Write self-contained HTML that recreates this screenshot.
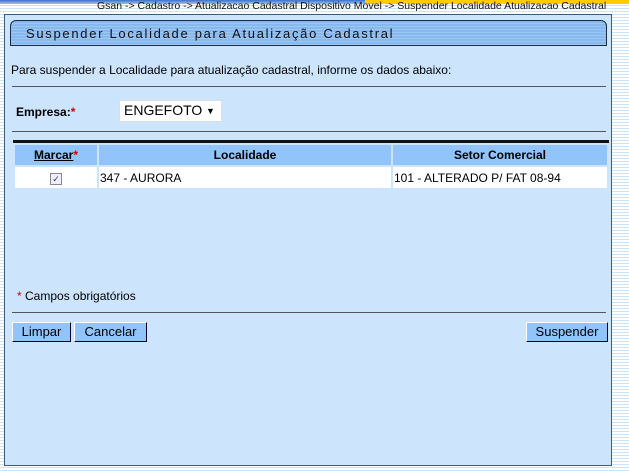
<!DOCTYPE html>
<html><head><style>
body{margin:0;width:629px;height:471px;overflow:hidden;font-family:"Liberation Sans",Arial,sans-serif;font-size:12px;
background:repeating-linear-gradient(to bottom,#fff 0,#fff 2px,#cfe3f6 2px,#cfe3f6 3px);position:relative}
.topb{position:absolute;left:0;top:0;width:365px;height:4px;background:linear-gradient(#3a6fd0,#9fc3f0)}
.topy{position:absolute;left:365px;top:0;width:264px;height:4px;background:#ffcc00}
.bc{position:absolute;left:97px;top:0;font-size:10.5px;color:#111;white-space:nowrap;line-height:12px}
.panel{position:absolute;left:4px;top:14px;width:606px;height:450px;background:#cce4fc;border:1px solid #3d5a78}
.title{position:absolute;left:5px;top:5px;width:595px;height:24px;border:1px solid #1a2c46;border-radius:6px 6px 0 0;
background:repeating-linear-gradient(to bottom,#87b8ee 0,#87b8ee 2px,#9cc6f4 2px,#9cc6f4 3px);}
.title span{position:absolute;left:15px;top:5px;font-size:13px;letter-spacing:1.7px;color:#111}
.abs{position:absolute;white-space:nowrap}
.hr{position:absolute;left:7px;width:594px;height:1px;background:#555}
.sel{position:absolute;left:114px;top:85px;width:101px;height:20px;background:#fff;border:1px solid #ddd;font-size:14px}
table{position:absolute;left:8px;top:125px;width:596px;border-collapse:separate;border-spacing:2px;border-top:3px solid #111;background:#cce4fc}
th{background:#90c4fa;height:18px;font-size:12px;font-weight:bold}
td{background:#fff;height:19px;font-size:12px}
.btn{position:absolute;top:307px;height:18px;background:#90c4fa;border:1px solid;border-color:#fff #002 #002 #fff;font-size:13px;text-align:center;line-height:18px}
</style></head><body>
<div class="topb"></div><div class="topy"></div>
<div class="bc">Gsan -&gt; Cadastro -&gt; Atualizacao Cadastral Dispositivo Movel -&gt; Suspender Localidade Atualizacao Cadastral</div>
<div class="panel">
<div class="title"><span>Suspender Localidade para Atualização Cadastral</span></div>
<div class="abs" style="left:6px;top:48px">Para suspender a Localidade para atualização cadastral, informe os dados abaixo:</div>
<div class="hr" style="top:71px"></div>
<div class="abs" style="left:11px;top:90px;font-weight:bold">Empresa:<span style="color:#c00">*</span></div>
<div class="sel"><span style="position:absolute;left:4px;top:1px">ENGEFOTO</span><span style="position:absolute;left:86px;top:5px;font-size:9px">▼</span></div>
<div class="hr" style="top:116px"></div>
<table>
<tr><th style="width:80px"><u>Marcar</u><span style="color:#c00">*</span></th><th style="width:290px">Localidade</th><th>Setor Comercial</th></tr>
<tr><td style="text-align:center"><span style="display:inline-block;width:10px;height:10px;border:1px solid #888;background:#eef;font-size:9px;line-height:10px;color:#336">✓</span></td><td>347 - AURORA</td><td>101 - ALTERADO P/ FAT 08-94</td></tr>
</table>
<div class="abs" style="left:12px;top:274px"><span style="color:#c00">*</span> Campos obrigatórios</div>
<div class="hr" style="top:297px"></div>
<div class="btn" style="left:7px;width:57px">Limpar</div>
<div class="btn" style="left:69px;width:71px">Cancelar</div>
<div class="btn" style="left:521px;width:80px">Suspender</div>
</div>
</body></html>
